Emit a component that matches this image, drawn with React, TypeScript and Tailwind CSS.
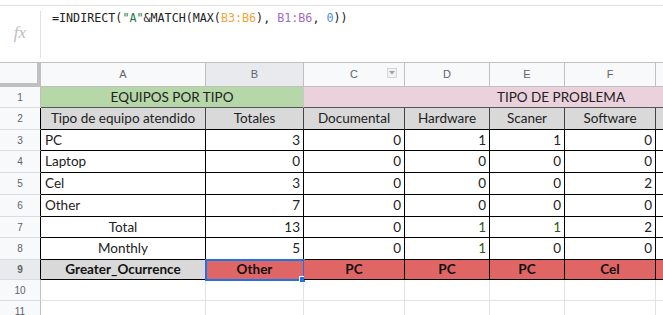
import React from "react";

const FONT = { fontFamily: "Lato, 'Liberation Sans', sans-serif" };

function RH({ n, h, sel, black }: { n: number; h: string; sel?: boolean; black?: boolean }) {
  return (
    <div
      className={`${h} w-[41px] shrink-0 flex items-center justify-center text-[10px] text-[#5f6368] border-b border-b-[#dadce0] border-r ${
        black ? "border-r-[#000]" : "border-r-[#c0c0c0]"
      } ${sel ? "bg-[#e8eaed]" : "bg-[#f8f9fa]"}`}
      style={{ fontFamily: "'Liberation Sans', Arial, sans-serif" }}
    >
      {n}
    </div>
  );
}

function C({
  w,
  cls,
  children,
}: {
  w: string;
  cls: string;
  children?: React.ReactNode;
}) {
  return (
    <div className={`${w} shrink-0 h-full flex items-center overflow-hidden whitespace-nowrap ${cls}`}>{children}</div>
  );
}

const widths = ["w-[165px]", "w-[98px]", "w-[101px]", "w-[85px]", "w-[75px]", "w-[91px]", "w-[100px]"];

function NumRow({
  n,
  h,
  label,
  center,
  vals,
  greens,
}: {
  n: number;
  h: string;
  label: string;
  center?: boolean;
  vals: (number | string)[];
  greens?: number[];
}) {
  return (
    <div className={`flex ${h}`}>
      <RH n={n} h={h} black />
      <C w={widths[0]} cls={`border-r border-b border-black text-[#222] ${center ? "justify-center" : "pl-[4px]"}`}>
        {label}
      </C>
      {vals.map((v, i) => (
        <C
          key={i}
          w={widths[i + 1]}
          cls={`border-r border-b border-black justify-end pr-[3px] ${
            greens && greens.includes(i) ? "text-[#2c5a1e]" : "text-[#222]"
          }`}
        >
          {v}
        </C>
      ))}
      <C w={widths[6]} cls="border-r border-b border-black" />
    </div>
  );
}

export default function App() {
  return (
    <div className="w-[663px] h-[315px] overflow-hidden bg-white relative" style={FONT}>
      <div className="h-[5px]" />
      {/* Formula bar */}
      <div className="flex h-[57px] border-t border-[#e0e0e0]">
        <div className="w-[40px] shrink-0 flex items-center justify-center">
          <span
            className="text-[17px] italic text-[#bdbdbd] pb-[2px]"
            style={{ fontFamily: "'Liberation Serif', serif" }}
          >
            fx
          </span>
        </div>
        <div className="w-px bg-[#e0e0e0] mt-[5px] mb-[4px]" />
        <div
          className="pl-[11px] pt-[4px] text-[11.7px] text-[#222] whitespace-nowrap"
          style={{ fontFamily: "'DejaVu Sans Mono', 'Liberation Mono', monospace" }}
        >
          =INDIRECT(<span className="text-[#188038]">"A"</span>&amp;MATCH(MAX(
          <span className="text-[#f0a43c]">B3:B6</span>), <span className="text-[#a56bc2]">B1:B6</span>,{" "}
          <span className="text-[#4a8fdb]">0</span>))
        </div>
      </div>

      {/* Grid */}
      <div className="border-t border-[#c0c0c0] text-[13.5px]">
        {/* column headers */}
        <div
          className="flex h-[24px] text-[11px] text-[#5f6368]"
          style={{ fontFamily: "'Liberation Sans', Arial, sans-serif" }}
        >
          <div className="w-[41px] shrink-0 bg-[#f8f9fa] border-r-[4px] border-b-[4px] border-[#c0c0c0]" />
          {["A", "B", "C", "D", "E", "F", "G"].map((l, i) => (
            <div
              key={l}
              className={`${widths[i]} shrink-0 relative flex items-center justify-center border-r border-b border-[#c0c0c0] ${
                i === 1 ? "bg-[#e8eaed]" : "bg-[#f8f9fa]"
              }`}
            >
              {i < 6 ? l : ""}
              {i === 2 && (
                <div className="absolute left-[83px] top-[5px] w-[10px] h-[10px] border border-[#d5d5d5] bg-[#f1f3f4] flex items-center justify-center">
                  <svg width="6" height="4" viewBox="0 0 6 4">
                    <path d="M0 0 L6 0 L3 3.5 Z" fill="#9aa0a6" />
                  </svg>
                </div>
              )}
            </div>
          ))}
        </div>

        {/* Row 1 */}
        <div className="flex h-[21px]">
          <RH n={1} h="h-[21px]" />
          <C w="w-[263px]" cls="bg-[#b6d7a8] justify-center border-r border-b border-r-[#c9c9c9] border-b-[#555] text-[#222]">
            EQUIPOS POR TIPO
          </C>
          <C w="w-[514px]" cls="bg-[#ead1dc] justify-center border-b border-b-[#555] text-[#222]">
            TIPO DE PROBLEMA
          </C>
        </div>

        {/* Row 2 */}
        <div className="flex h-[22px]">
          <RH n={2} h="h-[22px]" black />
          {["Tipo de equipo atendido", "Totales", "Documental", "Hardware", "Scaner", "Software", ""].map((t, i) => (
            <C key={i} w={widths[i]} cls="bg-[#d9d9d9] justify-center border-r border-b border-r-[#444] border-b-black text-[#222]">
              {t}
            </C>
          ))}
        </div>

        <NumRow n={3} h="h-[21px]" label="PC" vals={[3, 0, 1, 1, 0]} />
        <NumRow n={4} h="h-[22px]" label="Laptop" vals={[0, 0, 0, 0, 0]} />
        <NumRow n={5} h="h-[22px]" label="Cel" vals={[3, 0, 0, 0, 2]} />
        <NumRow n={6} h="h-[22px]" label="Other" vals={[7, 0, 0, 0, 0]} />
        <NumRow n={7} h="h-[21px]" label="Total" center vals={[13, 0, 1, 1, 2]} greens={[2, 3]} />
        <NumRow n={8} h="h-[22px]" label="Monthly" center vals={[5, 0, 1, 0, 0]} greens={[2]} />

        {/* Row 9 */}
        <div className="flex h-[20px] font-bold">
          <RH n={9} h="h-[20px]" sel black />
          <C w={widths[0]} cls="bg-[#d9d9d9] justify-center border-r border-b border-black text-[#111]">
            Greater_Ocurrence
          </C>
          {["Other", "PC", "PC", "PC", "Cel", ""].map((t, i) => (
            <div
              key={i}
              className={`${widths[i + 1]} shrink-0 h-full relative flex items-center justify-center bg-[#e06666] border-r border-b border-black text-[#111] whitespace-nowrap`}
            >
              {t}
              {i === 0 && (
                <>
                  <div className="absolute -left-[1px] -top-[1px] w-[100px] h-[22px] border-2 border-[#1a73e8]" />
                  <div className="absolute -right-[3px] -bottom-[4px] w-[7px] h-[7px] bg-[#1a73e8] border border-white" />
                </>
              )}
            </div>
          ))}
        </div>

        {/* Rows 10-11 */}
        {[10, 11].map((n) => (
          <div key={n} className="flex h-[21px]">
            <RH n={n} h="h-[21px]" />
            {widths.map((w, i) => (
              <C key={i} w={w} cls="border-r border-b border-[#e2e2e2]" />
            ))}
          </div>
        ))}
      </div>
    </div>
  );
}
